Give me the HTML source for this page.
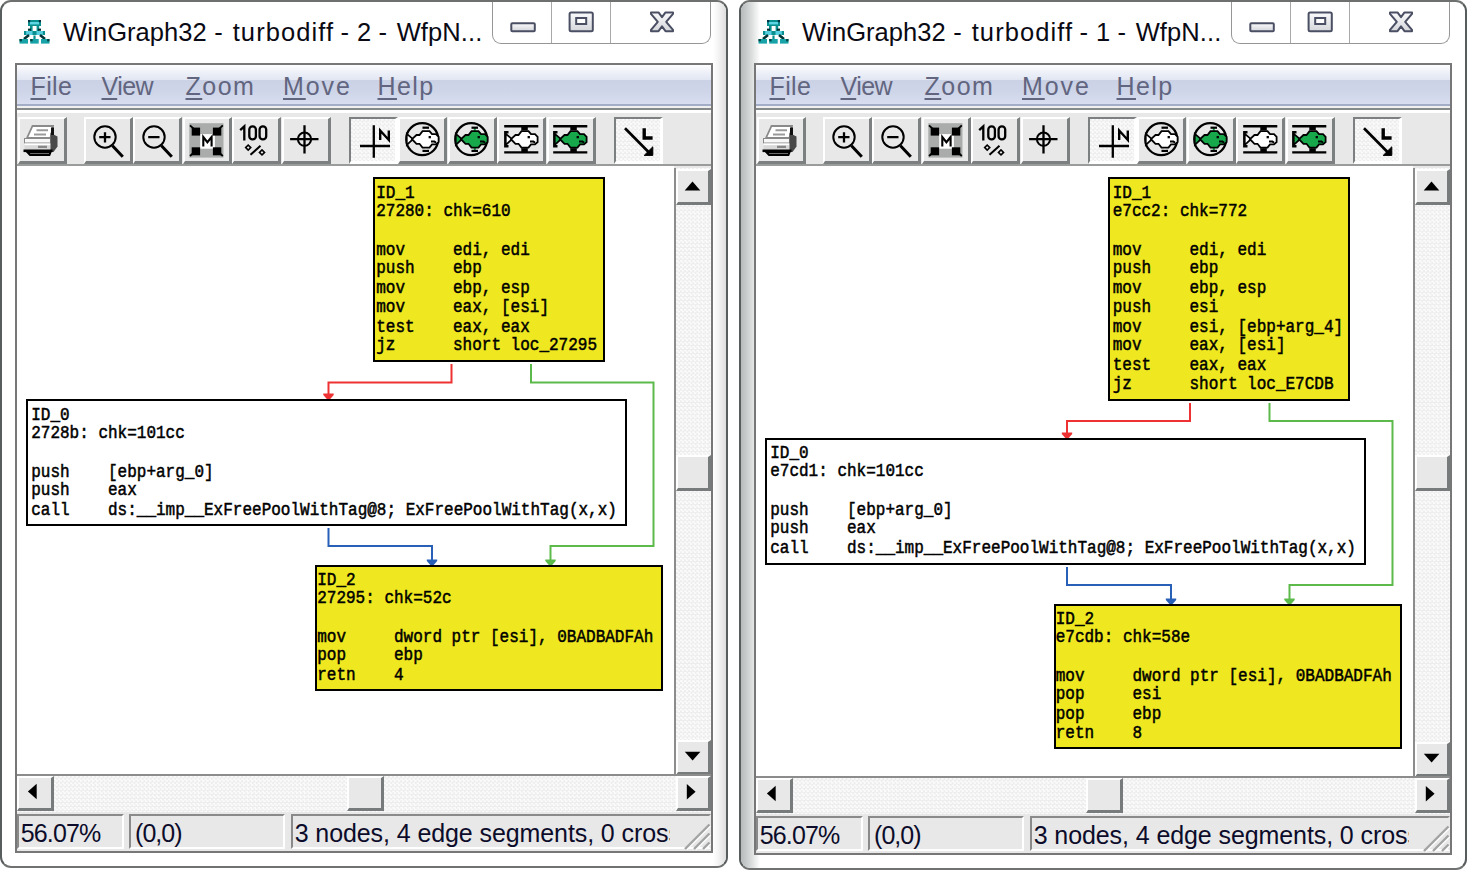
<!DOCTYPE html>
<html><head><meta charset="utf-8"><title>WinGraph32</title>
<style>
html,body{margin:0;padding:0;background:#fff;}
body{width:1467px;height:871px;position:relative;overflow:hidden;font-family:"Liberation Sans",sans-serif;}
.win{position:absolute;top:0;width:728px;height:868px;box-sizing:border-box;border:2px solid #575c5c;border-top-color:#6e7070;border-bottom-color:#707272;border-radius:11px;background:#fff;overflow:hidden;}
.abs{position:absolute;}
.title{position:absolute;top:12px;height:36px;line-height:36px;font-size:25.5px;color:#0a0a14;white-space:nowrap;letter-spacing:0px;}
.cap{position:absolute;left:489.5px;top:-2px;width:217px;height:42.5px;border:1.6px solid #969696;border-top:none;border-radius:0 0 9px 9px;background:#fff;box-sizing:content-box;}
.cap i{position:absolute;top:0;width:1.5px;height:43px;background:#a8a8a8;}
.frame{position:absolute;left:13px;top:61px;width:698px;height:790px;box-sizing:border-box;border:2px solid #777;background:#e8e8e8;overflow:hidden;}
.menu{position:absolute;left:0;top:0;width:100%;height:41px;background:linear-gradient(#fdfdfe 0,#eef1f8 7px,#e2e7f3 14.5px,#cbd2e6 15.5px,#ced5e8 26px,#d8ddef 38.5px,#a4adc6 39.3px,#a4adc6 40.5px,#e8e8ec 41px);}
.menu span{position:absolute;top:2.8px;height:36px;line-height:36px;font-size:25px;color:#62657f;white-space:nowrap;}
.menu span u{text-decoration:underline;text-decoration-thickness:2px;text-underline-offset:2.6px;text-decoration-skip-ink:none;}
.l1{position:absolute;left:0;width:100%;}
.tb{position:absolute;height:47px;width:49px;box-sizing:border-box;border-style:solid;border-width:2.5px 3px 3.5px 2.5px;border-color:#fff #7c8080 #7c8080 #fff;background:#e8e8e8;}
.tb.dn{border-color:#7c8080 #fff #fff #7c8080;background:#f4f4f4 repeating-conic-gradient(#fbfbfb 0 25%,#ededed 0 50%) 0 0/4.08px 4.08px;}
.tb svg{position:absolute;left:-2.5px;top:-2.5px;width:49px;height:47px;}
.canvas{position:absolute;background:#fff;overflow:hidden;}
.node{position:absolute;box-sizing:border-box;border:2.2px solid #000;font-family:"Liberation Mono",monospace;font-size:16px;line-height:19.4px;white-space:pre;color:#000;padding:0;}
.node pre{margin:0;font:inherit;position:absolute;left:2px;top:3.7px;transform-origin:0 0;transform:scaleY(1.1);line-height:17.545px;-webkit-text-stroke:0.45px #000;}
.node pre .fl{position:relative;top:1.8px;}
.y{background:#efe821;}
.w{background:#fff;}
.track{background:#f4f4f4 repeating-conic-gradient(#fbfbfb 0 25%,#ededed 0 50%) 0 0/4.08px 4.08px;}
.sbtn{position:absolute;box-sizing:border-box;border-style:solid;border-width:2px 3px 3px 2px;border-color:#fff #777b7b #777b7b #fff;background:#e8e8e8;}
.sbtn svg{position:absolute;left:0;top:0;}
.pan{position:absolute;height:35px;box-sizing:border-box;border-style:solid;border-width:2px;border-color:#8a8a8a #fff #fff #8a8a8a;background:#e8e8e8;overflow:hidden;}
.pan span{position:absolute;left:3px;top:1px;line-height:32px;font-size:25px;color:#0c0c2a;white-space:nowrap;}
</style></head>
<body>
<div class="win" style="left:0px;height:868px">
<div class="abs" style="left:711px;top:0;width:13px;height:870px;background:linear-gradient(90deg,#fff,#f4f4f4 40%,#dedede);"></div>
<svg class="abs" style="left:14.2px;top:14.2px" width="36" height="30" viewBox="16 16 36 30">
<rect x="28" y="20" width="13" height="6" fill="#0a8f8f"/><rect x="30" y="22" width="9" height="2.4" fill="#5fd6e4"/>
<rect x="28" y="20" width="2.2" height="2.2" fill="#034"/><rect x="38.8" y="20" width="2.2" height="2.2" fill="#034"/>
<rect x="30" y="26" width="2.6" height="5" fill="#0a8f8f"/><rect x="36.6" y="26" width="2.6" height="5" fill="#0a8f8f"/>
<rect x="28" y="28.6" width="3" height="2.2" fill="#033"/><rect x="38" y="28.6" width="3" height="2.2" fill="#033"/>
<rect x="24" y="31" width="21" height="4" fill="#56cfe0"/><rect x="24" y="31" width="2.2" height="4" fill="#0a8f8f"/><rect x="42.8" y="31" width="2.2" height="4" fill="#0a8f8f"/><rect x="32.5" y="31" width="4" height="4" fill="#0a8f8f"/>
<path d="M29,35 L24,39 M40,35 L45,39" stroke="#033" stroke-width="2.6" fill="none"/>
<rect x="33.4" y="35.5" width="2.2" height="4" fill="#0a8f8f"/>
<rect x="19.5" y="39" width="8.5" height="4.6" fill="#17a3a8"/><rect x="30.2" y="39" width="8.5" height="4.6" fill="#17a3a8"/><rect x="41" y="39" width="8.5" height="4.6" fill="#17a3a8"/>
<rect x="19.5" y="39" width="2.4" height="2.4" fill="#044"/><rect x="30.2" y="39" width="2.4" height="2.4" fill="#044"/><rect x="47.1" y="39" width="2.4" height="2.4" fill="#044"/>
</svg>
<span class="title" style="left:61.1px;letter-spacing:0.048px">WinGraph32</span>
<span class="title" style="left:212.3px;letter-spacing:0px">-</span>
<span class="title" style="left:230.7px;letter-spacing:1.088px">turbodiff</span>
<span class="title" style="left:338.5px;letter-spacing:0px">-</span>
<span class="title" style="left:354.9px;letter-spacing:0.9px">2</span>
<span class="title" style="left:376.5px;letter-spacing:0px">-</span>
<span class="title" style="left:394.7px;letter-spacing:0.097px">WfpN...</span>
<div class="cap"><i style="left:58.2px"></i><i style="left:117px"></i>
<svg class="abs" style="left:0;top:0" width="217" height="43" viewBox="493 0 217 43">
<defs><linearGradient id="cg" x1="0" y1="0" x2="0" y2="1"><stop offset="0" stop-color="#fbfbfc"/><stop offset="1" stop-color="#d4d6da"/></linearGradient></defs>
<rect x="511.3" y="23.2" width="23.5" height="8" rx="1" fill="url(#cg)" stroke="#4a4f63" stroke-width="2"/>
<rect x="569.6" y="12.4" width="23.2" height="18.8" rx="1.5" fill="url(#cg)" stroke="#4a4f63" stroke-width="2"/>
<rect x="576.2" y="18" width="10" height="6" fill="#fff" stroke="#4a4f63" stroke-width="2"/>
<path d="M651,12.400 h7.500 l3.500,4.800 l3.500,-4.800 h7.500 v1.500 l-6.800,8 l6.800,8 v1.300 h-7.500 l-3.500,-4.800 l-3.500,4.800 h-7.500 v-1.300 l6.800,-8 l-6.800,-8 z" fill="url(#cg)" stroke="#4a4f63" stroke-width="2" stroke-linejoin="round"/>
</svg></div>
<div class="frame" style="height:790px">
<div class="menu">
<span style="left:13.5px;letter-spacing:0.34px"><u>F</u>ile</span>
<span style="left:84.5px;letter-spacing:-0.527px"><u>V</u>iew</span>
<span style="left:168.5px;letter-spacing:1.474px"><u>Z</u>oom</span>
<span style="left:266px;letter-spacing:1.924px"><u>M</u>ove</span>
<span style="left:360.5px;letter-spacing:1.429px"><u>H</u>elp</span>
</div>
<div class="l1" style="top:41px;height:2px;background:#f0f0f0"></div>
<div class="l1" style="top:43px;height:2px;background:#868a8a"></div>
<div class="l1" style="top:45px;height:2.5px;background:#fff"></div>
<div class="tb" style="left:0.5px;top:52px"><svg viewBox="0 0 49 47"><g>
<polygon points="15.5,9 36,9 33.5,21 10,21" fill="#fff" stroke="#8a8a8a" stroke-width="1.8"/>
<line x1="19.5" y1="13.3" x2="31" y2="13.3" stroke="#9a9a9a" stroke-width="2"/>
<line x1="17" y1="17.6" x2="29" y2="17.6" stroke="#9a9a9a" stroke-width="2"/>
<rect x="7.5" y="21.5" width="26" height="4.5" fill="#f8f8f8" stroke="#8a8a8a" stroke-width="1"/>
<rect x="7.5" y="26.5" width="26" height="6.5" fill="#d8d8d8"/>
<rect x="21" y="28.6" width="9" height="2.4" fill="#888"/>
<rect x="7.5" y="26.6" width="26" height="1.6" fill="#fff"/>
<polygon points="33.5,16 40.5,19.5 40.5,29.5 36.5,35 33.5,35" fill="#4a4a4a"/>
<rect x="34" y="10.5" width="3" height="7.5" fill="#111"/>
<rect x="6.5" y="32.5" width="29" height="2.6" fill="#000"/>
<polygon points="10.5,35.5 33.5,35.5 32.5,38 13,38" fill="#d8d8d8" stroke="#000" stroke-width="1.8"/>
</g></svg></div>
<div class="tb" style="left:67px;top:52px"><svg viewBox="0 0 49 47"><circle cx="21" cy="20" r="10.7" fill="none" stroke="#000" stroke-width="2"/>
<line x1="28.5" y1="28.8" x2="38.8" y2="39.8" stroke="#000" stroke-width="3"/>
<line x1="15.2" y1="20.2" x2="26.5" y2="20.2" stroke="#000" stroke-width="2.3"/><line x1="21" y1="15.2" x2="21" y2="25.5" stroke="#000" stroke-width="2.3"/></svg></div>
<div class="tb" style="left:116px;top:52px"><svg viewBox="0 0 49 47"><circle cx="21" cy="20" r="10.7" fill="none" stroke="#000" stroke-width="2"/>
<line x1="28.5" y1="28.8" x2="38.8" y2="39.8" stroke="#000" stroke-width="3"/>
<line x1="15.2" y1="20.2" x2="26.5" y2="20.2" stroke="#000" stroke-width="2.3"/></svg></div>
<div class="tb" style="left:165.5px;top:52px"><svg viewBox="0 0 49 47"><rect x="7.3" y="6.2" width="34.2" height="34.4" fill="#aaacac"/>
<rect x="18.2" y="17.1" width="14.7" height="14.6" fill="#fff"/>
<g fill="#000" stroke="#000" stroke-width="1.8">
<rect x="10.6" y="11.5" width="6.6" height="6.2"/><rect x="31.8" y="11.5" width="6.6" height="6.2"/>
<rect x="10.6" y="31.2" width="6.6" height="6.2"/><rect x="31.8" y="31.2" width="6.6" height="6.2"/>
<line x1="8" y1="8.3" x2="13" y2="13"/><line x1="40.8" y1="8.3" x2="36" y2="13"/>
<line x1="8" y1="39" x2="13" y2="34.5"/><line x1="40.8" y1="39" x2="36" y2="34.5"/>
</g>
<path d="M21.3,29.6 V20 L25.4,25.2 L29.6,20 V29.6" fill="none" stroke="#000" stroke-width="2.1"/></svg></div>
<div class="tb" style="left:215px;top:52px"><svg viewBox="0 0 49 47"><g fill="none" stroke="#000" stroke-width="2.3">
<path d="M8.2,13.2 L12.3,9.4 V23.4"/>
<rect x="17.3" y="9.4" width="6.6" height="13" rx="3.2"/>
<rect x="27.6" y="9.4" width="6.6" height="13" rx="3.2"/>
<line x1="18.5" y1="37.8" x2="28.5" y2="28.8" stroke-width="2"/>
</g>
<rect x="14.4" y="28.8" width="3.6" height="3.6" transform="rotate(45 16.2 30.6)" fill="none" stroke="#000" stroke-width="1.6"/>
<rect x="28.2" y="33.6" width="3.6" height="3.6" transform="rotate(45 30 35.4)" fill="none" stroke="#000" stroke-width="1.6"/></svg></div>
<div class="tb" style="left:264.5px;top:52px"><svg viewBox="0 0 49 47"><g fill="none" stroke="#000" stroke-width="2.3">
<line x1="9.1" y1="22.2" x2="37.5" y2="22.2"/><line x1="23.5" y1="8.2" x2="23.5" y2="36.5"/>
<circle cx="23.5" cy="22.2" r="6.6" stroke-width="2"/></g></svg></div>
<div class="tb dn" style="left:332px;top:52px"><svg viewBox="0 0 49 47"><g fill="none" stroke="#000" stroke-width="2.3">
<line x1="24.8" y1="8.2" x2="24.8" y2="40.7"/><line x1="11" y1="29" x2="41" y2="29"/>
<path d="M31.2,23 V13.5 L39.8,23 V13.5" stroke-width="2.4"/></g></svg></div>
<div class="tb" style="left:381px;top:52px"><svg viewBox="0 0 49 47"><circle cx="24.2" cy="22.2" r="16" fill="none" stroke="#000" stroke-width="2.2"/>
<rect x="26.8" y="10.5" width="2" height="4" fill="#fff"/><rect x="26.8" y="30" width="2" height="4" fill="#fff"/>
<rect x="24.5" y="9.6" width="6.5" height="2.2" fill="#000"/><rect x="24.5" y="32.8" width="6.5" height="2.2" fill="#000"/>
<polygon points="15,22.2 8.8,16.8 8.8,27.8" fill="#fff" stroke="#000" stroke-width="1.7" stroke-linejoin="miter"/>
<polygon points="14,22.2 18.5,18 21.5,18 24.5,14.2 31.5,14.2 34,17.2 38,17.2 40.6,19.8 40.6,25 38,27.4 34,27.4 31.5,30.6 24.5,30.6 21.5,26.8 18.5,26.8" fill="#fff" stroke="#000" stroke-width="1.8"/>
<rect x="30.6" y="19" width="2.3" height="2.3" fill="#000"/>
<path d="M33,24.4 h3.4 l1.6,1.4" fill="none" stroke="#000" stroke-width="2"/></svg></div>
<div class="tb" style="left:430.5px;top:52px"><svg viewBox="0 0 49 47"><circle cx="24.2" cy="22.2" r="16" fill="none" stroke="#000" stroke-width="2.2"/>
<rect x="26.8" y="10.5" width="2" height="4" fill="#17a84b"/><rect x="26.8" y="30" width="2" height="4" fill="#17a84b"/>
<rect x="24.5" y="9.6" width="6.5" height="2.2" fill="#000"/><rect x="24.5" y="32.8" width="6.5" height="2.2" fill="#000"/>
<polygon points="15,22.2 8.8,16.8 8.8,27.8" fill="#17a84b" stroke="#000" stroke-width="1.7" stroke-linejoin="miter"/>
<polygon points="14,22.2 18.5,18 21.5,18 24.5,14.2 31.5,14.2 34,17.2 38,17.2 40.6,19.8 40.6,25 38,27.4 34,27.4 31.5,30.6 24.5,30.6 21.5,26.8 18.5,26.8" fill="#17a84b" stroke="#000" stroke-width="1.8"/>
<rect x="30.6" y="19" width="2.3" height="2.3" fill="#000"/>
<path d="M33,24.4 h3.4 l1.6,1.4" fill="none" stroke="#000" stroke-width="2"/></svg></div>
<div class="tb" style="left:480px;top:52px"><svg viewBox="0 0 49 47"><line x1="7.2" y1="9.3" x2="41.3" y2="9.3" stroke="#000" stroke-width="2.4"/>
<line x1="7.2" y1="35.4" x2="41.3" y2="35.4" stroke="#000" stroke-width="2.4"/>
<rect x="24.3" y="9.3" width="6.5" height="4" fill="#000"/><rect x="24.3" y="31.2" width="6.5" height="4" fill="#000"/>
<path d="M11.5,15.3 H8.3 V29.3 H11.5" fill="none" stroke="#000" stroke-width="2.4"/>
<polygon points="15,22.2 8.8,16.8 8.8,27.8" fill="#fff" stroke="#000" stroke-width="1.7" stroke-linejoin="miter"/>
<polygon points="14,22.2 18.5,18 21.5,18 24.5,14.2 31.5,14.2 34,17.2 38,17.2 40.6,19.8 40.6,25 38,27.4 34,27.4 31.5,30.6 24.5,30.6 21.5,26.8 18.5,26.8" fill="#fff" stroke="#000" stroke-width="1.8"/>
<rect x="30.6" y="19" width="2.3" height="2.3" fill="#000"/>
<path d="M33,24.4 h3.4 l1.6,1.4" fill="none" stroke="#000" stroke-width="2"/></svg></div>
<div class="tb" style="left:529.5px;top:52px"><svg viewBox="0 0 49 47"><line x1="7.2" y1="9.3" x2="41.3" y2="9.3" stroke="#000" stroke-width="2.4"/>
<line x1="7.2" y1="35.4" x2="41.3" y2="35.4" stroke="#000" stroke-width="2.4"/>
<rect x="24.3" y="9.3" width="6.5" height="4" fill="#000"/><rect x="24.3" y="31.2" width="6.5" height="4" fill="#000"/>
<path d="M11.5,15.3 H8.3 V29.3 H11.5" fill="none" stroke="#000" stroke-width="2.4"/>
<polygon points="15,22.2 8.8,16.8 8.8,27.8" fill="#17a84b" stroke="#000" stroke-width="1.7" stroke-linejoin="miter"/>
<polygon points="14,22.2 18.5,18 21.5,18 24.5,14.2 31.5,14.2 34,17.2 38,17.2 40.6,19.8 40.6,25 38,27.4 34,27.4 31.5,30.6 24.5,30.6 21.5,26.8 18.5,26.8" fill="#17a84b" stroke="#000" stroke-width="1.8"/>
<rect x="30.6" y="19" width="2.3" height="2.3" fill="#000"/>
<path d="M33,24.4 h3.4 l1.6,1.4" fill="none" stroke="#000" stroke-width="2"/></svg></div>
<div class="tb dn" style="left:597px;top:52px"><svg viewBox="0 0 49 47"><g fill="none" stroke="#000">
<line x1="11" y1="11.2" x2="35" y2="35.5" stroke-width="2.7"/>
<path d="M30.2,11.2 V21 H38.6" stroke-width="3.4"/></g>
<polygon points="38.8,29.8 38.8,38.4 30.2,38.4" fill="#000" stroke="#000" stroke-width="1"/></svg></div>
<div class="l1" style="top:99px;height:2px;background:#9a9c9c"></div>
<div class="canvas" style="left:0px;top:101px;width:657px;height:608px">
<svg class="abs" style="left:0;top:0" width="657" height="608" viewBox="17 166 657 608">
<path d="M451.5,364 L451.5,382.5 L328.5,382.5 L328.5,399" fill="none" stroke="#ee3233" stroke-width="2"/><polygon points="323.3,393.4 333.7,393.4 333.7,395 329.3,400 327.7,400 323.3,395" fill="#ee3233"/>
<path d="M531,364 L531,382.5 L653.5,382.5 L653.5,546 L550.5,546 L550.5,565" fill="none" stroke="#5cba4a" stroke-width="2"/><polygon points="545.3,559.4 555.7,559.4 555.7,561 551.3,566 549.7,566 545.3,561" fill="#5cba4a"/>
<path d="M328.5,528 L328.5,546 L432,546 L432,565" fill="none" stroke="#2860b8" stroke-width="2"/><polygon points="426.8,559.4 437.2,559.4 437.2,561 432.8,566 431.2,566 426.8,561" fill="#2860b8"/>
</svg>
<div class="node y" style="left:356px;top:11px;width:232px;height:184.5px"><pre style="left:1.2px"><span class="fl">ID_1</span>
27280: chk=610

mov     edi, edi
push    ebp
mov     ebp, esp
mov     eax, [esi]
test    eax, eax
jz      short loc_27295</pre></div>
<div class="node w" style="left:9px;top:233px;width:601px;height:127px"><pre style="left:3.2px"><span class="fl">ID_0</span>
2728b: chk=101cc

push    [ebp+arg_0]
push    eax
call    ds:__imp__ExFreePoolWithTag@8; ExFreePoolWithTag(x,x)</pre></div>
<div class="node y" style="left:297.5px;top:398.5px;width:348.5px;height:126.5px"><pre style="left:0.7px"><span class="fl">ID_2</span>
27295: chk=52c

mov     dword ptr [esi], 0BADBADFAh
pop     ebp
retn    4</pre></div>
</div>
<div class="abs track" style="left:657px;top:103px;width:37px;height:606px;border-left:2px solid #8c8c8c;box-sizing:border-box"></div>
<div class="sbtn" style="left:659px;top:103.5px;width:35px;height:36px"><svg width="35" height="35" viewBox="0 0 35 35"><polygon points="6.7,19.4 22.3,19.4 14.5,10.6" fill="#000"/></svg></div>
<div class="sbtn" style="left:659px;top:390px;width:35px;height:35.5px"></div>
<div class="sbtn" style="left:659px;top:675px;width:35px;height:34.5px"><svg width="35" height="35" viewBox="0 0 35 35"><polygon points="6.8,9.799999999999999 22.4,9.799999999999999 14.6,18.6" fill="#000"/></svg></div>
<div class="abs track" style="left:0px;top:709px;width:694px;height:38px;border-top:2px solid #8c8c8c;box-sizing:border-box"></div>
<div class="sbtn" style="left:0px;top:711px;width:36.5px;height:34.5px"><svg width="36" height="35" viewBox="0 0 36 35"><polygon points="17.700000000000003,5.7 17.700000000000003,21.3 8.9,13.5" fill="#000"/></svg></div>
<div class="sbtn" style="left:330px;top:711px;width:36.5px;height:34.5px"></div>
<div class="sbtn" style="left:659px;top:711px;width:35px;height:34.5px"><svg width="35" height="35" viewBox="0 0 35 35"><polygon points="8.799999999999999,5.8999999999999995 8.799999999999999,21.5 17.6,13.7" fill="#000"/></svg></div>
<div class="pan" style="left:0px;top:749px;width:106.5px"><span style="left:1.8px;letter-spacing:-0.872px">56.07%</span></div>
<div class="pan" style="left:112px;top:749px;width:155.5px"><span style="left:4.1px;letter-spacing:-0.995px">(0,0)</span></div>
<div class="pan" style="left:273.5px;top:749px;width:420.5px;border-right-color:#e8e8e8"><div class="abs" style="left:0;top:0;width:377px;height:34px;overflow:hidden"><span style="left:2.2px;letter-spacing:-0.091px">3 nodes, 4 edge segments, 0 crossings</span></div></div>
<svg class="abs" style="left:659px;top:750px" width="36" height="36" viewBox="676 815 36 36">
<g stroke="#fff" stroke-width="2" fill="none"><line x1="686.5" y1="849.5" x2="710.5" y2="825.5"/><line x1="695.5" y1="849.5" x2="710.5" y2="834.5"/><line x1="704.5" y1="849.5" x2="710.5" y2="843.5"/></g>
<g stroke="#a2a4a4" stroke-width="2.4" fill="none"><line x1="685" y1="849" x2="709.5" y2="824.5"/><line x1="694" y1="849" x2="709.5" y2="833.5"/><line x1="703" y1="849" x2="709.5" y2="842.5"/></g></svg>
</div>
</div>
<div class="win" style="left:739px;height:870.2px">
<div class="abs" style="left:0;top:0;width:19px;height:870px;background:linear-gradient(90deg,#b6baba 0,#d0d3d3 40%,#e8e9e9 72%,#fff 100%);"></div>
<svg class="abs" style="left:14.2px;top:14.2px" width="36" height="30" viewBox="16 16 36 30">
<rect x="28" y="20" width="13" height="6" fill="#0a8f8f"/><rect x="30" y="22" width="9" height="2.4" fill="#5fd6e4"/>
<rect x="28" y="20" width="2.2" height="2.2" fill="#034"/><rect x="38.8" y="20" width="2.2" height="2.2" fill="#034"/>
<rect x="30" y="26" width="2.6" height="5" fill="#0a8f8f"/><rect x="36.6" y="26" width="2.6" height="5" fill="#0a8f8f"/>
<rect x="28" y="28.6" width="3" height="2.2" fill="#033"/><rect x="38" y="28.6" width="3" height="2.2" fill="#033"/>
<rect x="24" y="31" width="21" height="4" fill="#56cfe0"/><rect x="24" y="31" width="2.2" height="4" fill="#0a8f8f"/><rect x="42.8" y="31" width="2.2" height="4" fill="#0a8f8f"/><rect x="32.5" y="31" width="4" height="4" fill="#0a8f8f"/>
<path d="M29,35 L24,39 M40,35 L45,39" stroke="#033" stroke-width="2.6" fill="none"/>
<rect x="33.4" y="35.5" width="2.2" height="4" fill="#0a8f8f"/>
<rect x="19.5" y="39" width="8.5" height="4.6" fill="#17a3a8"/><rect x="30.2" y="39" width="8.5" height="4.6" fill="#17a3a8"/><rect x="41" y="39" width="8.5" height="4.6" fill="#17a3a8"/>
<rect x="19.5" y="39" width="2.4" height="2.4" fill="#044"/><rect x="30.2" y="39" width="2.4" height="2.4" fill="#044"/><rect x="47.1" y="39" width="2.4" height="2.4" fill="#044"/>
</svg>
<span class="title" style="left:61.1px;letter-spacing:0.048px">WinGraph32</span>
<span class="title" style="left:212.3px;letter-spacing:0px">-</span>
<span class="title" style="left:230.7px;letter-spacing:1.088px">turbodiff</span>
<span class="title" style="left:338.5px;letter-spacing:0px">-</span>
<span class="title" style="left:354.9px;letter-spacing:0.9px">1</span>
<span class="title" style="left:376.5px;letter-spacing:0px">-</span>
<span class="title" style="left:394.7px;letter-spacing:0.097px">WfpN...</span>
<div class="cap"><i style="left:58.2px"></i><i style="left:117px"></i>
<svg class="abs" style="left:0;top:0" width="217" height="43" viewBox="493 0 217 43">
<defs><linearGradient id="cg" x1="0" y1="0" x2="0" y2="1"><stop offset="0" stop-color="#fbfbfc"/><stop offset="1" stop-color="#d4d6da"/></linearGradient></defs>
<rect x="511.3" y="23.2" width="23.5" height="8" rx="1" fill="url(#cg)" stroke="#4a4f63" stroke-width="2"/>
<rect x="569.6" y="12.4" width="23.2" height="18.8" rx="1.5" fill="url(#cg)" stroke="#4a4f63" stroke-width="2"/>
<rect x="576.2" y="18" width="10" height="6" fill="#fff" stroke="#4a4f63" stroke-width="2"/>
<path d="M651,12.400 h7.500 l3.500,4.800 l3.500,-4.800 h7.500 v1.500 l-6.800,8 l6.800,8 v1.300 h-7.500 l-3.500,-4.800 l-3.500,4.800 h-7.500 v-1.300 l6.800,-8 l-6.800,-8 z" fill="url(#cg)" stroke="#4a4f63" stroke-width="2" stroke-linejoin="round"/>
</svg></div>
<div class="frame" style="height:792.2px">
<div class="menu">
<span style="left:13.5px;letter-spacing:0.34px"><u>F</u>ile</span>
<span style="left:84.5px;letter-spacing:-0.527px"><u>V</u>iew</span>
<span style="left:168.5px;letter-spacing:1.474px"><u>Z</u>oom</span>
<span style="left:266px;letter-spacing:1.924px"><u>M</u>ove</span>
<span style="left:360.5px;letter-spacing:1.429px"><u>H</u>elp</span>
</div>
<div class="l1" style="top:41px;height:2px;background:#f0f0f0"></div>
<div class="l1" style="top:43px;height:2px;background:#868a8a"></div>
<div class="l1" style="top:45px;height:2.5px;background:#fff"></div>
<div class="tb" style="left:0.5px;top:52px"><svg viewBox="0 0 49 47"><g>
<polygon points="15.5,9 36,9 33.5,21 10,21" fill="#fff" stroke="#8a8a8a" stroke-width="1.8"/>
<line x1="19.5" y1="13.3" x2="31" y2="13.3" stroke="#9a9a9a" stroke-width="2"/>
<line x1="17" y1="17.6" x2="29" y2="17.6" stroke="#9a9a9a" stroke-width="2"/>
<rect x="7.5" y="21.5" width="26" height="4.5" fill="#f8f8f8" stroke="#8a8a8a" stroke-width="1"/>
<rect x="7.5" y="26.5" width="26" height="6.5" fill="#d8d8d8"/>
<rect x="21" y="28.6" width="9" height="2.4" fill="#888"/>
<rect x="7.5" y="26.6" width="26" height="1.6" fill="#fff"/>
<polygon points="33.5,16 40.5,19.5 40.5,29.5 36.5,35 33.5,35" fill="#4a4a4a"/>
<rect x="34" y="10.5" width="3" height="7.5" fill="#111"/>
<rect x="6.5" y="32.5" width="29" height="2.6" fill="#000"/>
<polygon points="10.5,35.5 33.5,35.5 32.5,38 13,38" fill="#d8d8d8" stroke="#000" stroke-width="1.8"/>
</g></svg></div>
<div class="tb" style="left:67px;top:52px"><svg viewBox="0 0 49 47"><circle cx="21" cy="20" r="10.7" fill="none" stroke="#000" stroke-width="2"/>
<line x1="28.5" y1="28.8" x2="38.8" y2="39.8" stroke="#000" stroke-width="3"/>
<line x1="15.2" y1="20.2" x2="26.5" y2="20.2" stroke="#000" stroke-width="2.3"/><line x1="21" y1="15.2" x2="21" y2="25.5" stroke="#000" stroke-width="2.3"/></svg></div>
<div class="tb" style="left:116px;top:52px"><svg viewBox="0 0 49 47"><circle cx="21" cy="20" r="10.7" fill="none" stroke="#000" stroke-width="2"/>
<line x1="28.5" y1="28.8" x2="38.8" y2="39.8" stroke="#000" stroke-width="3"/>
<line x1="15.2" y1="20.2" x2="26.5" y2="20.2" stroke="#000" stroke-width="2.3"/></svg></div>
<div class="tb" style="left:165.5px;top:52px"><svg viewBox="0 0 49 47"><rect x="7.3" y="6.2" width="34.2" height="34.4" fill="#aaacac"/>
<rect x="18.2" y="17.1" width="14.7" height="14.6" fill="#fff"/>
<g fill="#000" stroke="#000" stroke-width="1.8">
<rect x="10.6" y="11.5" width="6.6" height="6.2"/><rect x="31.8" y="11.5" width="6.6" height="6.2"/>
<rect x="10.6" y="31.2" width="6.6" height="6.2"/><rect x="31.8" y="31.2" width="6.6" height="6.2"/>
<line x1="8" y1="8.3" x2="13" y2="13"/><line x1="40.8" y1="8.3" x2="36" y2="13"/>
<line x1="8" y1="39" x2="13" y2="34.5"/><line x1="40.8" y1="39" x2="36" y2="34.5"/>
</g>
<path d="M21.3,29.6 V20 L25.4,25.2 L29.6,20 V29.6" fill="none" stroke="#000" stroke-width="2.1"/></svg></div>
<div class="tb" style="left:215px;top:52px"><svg viewBox="0 0 49 47"><g fill="none" stroke="#000" stroke-width="2.3">
<path d="M8.2,13.2 L12.3,9.4 V23.4"/>
<rect x="17.3" y="9.4" width="6.6" height="13" rx="3.2"/>
<rect x="27.6" y="9.4" width="6.6" height="13" rx="3.2"/>
<line x1="18.5" y1="37.8" x2="28.5" y2="28.8" stroke-width="2"/>
</g>
<rect x="14.4" y="28.8" width="3.6" height="3.6" transform="rotate(45 16.2 30.6)" fill="none" stroke="#000" stroke-width="1.6"/>
<rect x="28.2" y="33.6" width="3.6" height="3.6" transform="rotate(45 30 35.4)" fill="none" stroke="#000" stroke-width="1.6"/></svg></div>
<div class="tb" style="left:264.5px;top:52px"><svg viewBox="0 0 49 47"><g fill="none" stroke="#000" stroke-width="2.3">
<line x1="9.1" y1="22.2" x2="37.5" y2="22.2"/><line x1="23.5" y1="8.2" x2="23.5" y2="36.5"/>
<circle cx="23.5" cy="22.2" r="6.6" stroke-width="2"/></g></svg></div>
<div class="tb dn" style="left:332px;top:52px"><svg viewBox="0 0 49 47"><g fill="none" stroke="#000" stroke-width="2.3">
<line x1="24.8" y1="8.2" x2="24.8" y2="40.7"/><line x1="11" y1="29" x2="41" y2="29"/>
<path d="M31.2,23 V13.5 L39.8,23 V13.5" stroke-width="2.4"/></g></svg></div>
<div class="tb" style="left:381px;top:52px"><svg viewBox="0 0 49 47"><circle cx="24.2" cy="22.2" r="16" fill="none" stroke="#000" stroke-width="2.2"/>
<rect x="26.8" y="10.5" width="2" height="4" fill="#fff"/><rect x="26.8" y="30" width="2" height="4" fill="#fff"/>
<rect x="24.5" y="9.6" width="6.5" height="2.2" fill="#000"/><rect x="24.5" y="32.8" width="6.5" height="2.2" fill="#000"/>
<polygon points="15,22.2 8.8,16.8 8.8,27.8" fill="#fff" stroke="#000" stroke-width="1.7" stroke-linejoin="miter"/>
<polygon points="14,22.2 18.5,18 21.5,18 24.5,14.2 31.5,14.2 34,17.2 38,17.2 40.6,19.8 40.6,25 38,27.4 34,27.4 31.5,30.6 24.5,30.6 21.5,26.8 18.5,26.8" fill="#fff" stroke="#000" stroke-width="1.8"/>
<rect x="30.6" y="19" width="2.3" height="2.3" fill="#000"/>
<path d="M33,24.4 h3.4 l1.6,1.4" fill="none" stroke="#000" stroke-width="2"/></svg></div>
<div class="tb" style="left:430.5px;top:52px"><svg viewBox="0 0 49 47"><circle cx="24.2" cy="22.2" r="16" fill="none" stroke="#000" stroke-width="2.2"/>
<rect x="26.8" y="10.5" width="2" height="4" fill="#17a84b"/><rect x="26.8" y="30" width="2" height="4" fill="#17a84b"/>
<rect x="24.5" y="9.6" width="6.5" height="2.2" fill="#000"/><rect x="24.5" y="32.8" width="6.5" height="2.2" fill="#000"/>
<polygon points="15,22.2 8.8,16.8 8.8,27.8" fill="#17a84b" stroke="#000" stroke-width="1.7" stroke-linejoin="miter"/>
<polygon points="14,22.2 18.5,18 21.5,18 24.5,14.2 31.5,14.2 34,17.2 38,17.2 40.6,19.8 40.6,25 38,27.4 34,27.4 31.5,30.6 24.5,30.6 21.5,26.8 18.5,26.8" fill="#17a84b" stroke="#000" stroke-width="1.8"/>
<rect x="30.6" y="19" width="2.3" height="2.3" fill="#000"/>
<path d="M33,24.4 h3.4 l1.6,1.4" fill="none" stroke="#000" stroke-width="2"/></svg></div>
<div class="tb" style="left:480px;top:52px"><svg viewBox="0 0 49 47"><line x1="7.2" y1="9.3" x2="41.3" y2="9.3" stroke="#000" stroke-width="2.4"/>
<line x1="7.2" y1="35.4" x2="41.3" y2="35.4" stroke="#000" stroke-width="2.4"/>
<rect x="24.3" y="9.3" width="6.5" height="4" fill="#000"/><rect x="24.3" y="31.2" width="6.5" height="4" fill="#000"/>
<path d="M11.5,15.3 H8.3 V29.3 H11.5" fill="none" stroke="#000" stroke-width="2.4"/>
<polygon points="15,22.2 8.8,16.8 8.8,27.8" fill="#fff" stroke="#000" stroke-width="1.7" stroke-linejoin="miter"/>
<polygon points="14,22.2 18.5,18 21.5,18 24.5,14.2 31.5,14.2 34,17.2 38,17.2 40.6,19.8 40.6,25 38,27.4 34,27.4 31.5,30.6 24.5,30.6 21.5,26.8 18.5,26.8" fill="#fff" stroke="#000" stroke-width="1.8"/>
<rect x="30.6" y="19" width="2.3" height="2.3" fill="#000"/>
<path d="M33,24.4 h3.4 l1.6,1.4" fill="none" stroke="#000" stroke-width="2"/></svg></div>
<div class="tb" style="left:529.5px;top:52px"><svg viewBox="0 0 49 47"><line x1="7.2" y1="9.3" x2="41.3" y2="9.3" stroke="#000" stroke-width="2.4"/>
<line x1="7.2" y1="35.4" x2="41.3" y2="35.4" stroke="#000" stroke-width="2.4"/>
<rect x="24.3" y="9.3" width="6.5" height="4" fill="#000"/><rect x="24.3" y="31.2" width="6.5" height="4" fill="#000"/>
<path d="M11.5,15.3 H8.3 V29.3 H11.5" fill="none" stroke="#000" stroke-width="2.4"/>
<polygon points="15,22.2 8.8,16.8 8.8,27.8" fill="#17a84b" stroke="#000" stroke-width="1.7" stroke-linejoin="miter"/>
<polygon points="14,22.2 18.5,18 21.5,18 24.5,14.2 31.5,14.2 34,17.2 38,17.2 40.6,19.8 40.6,25 38,27.4 34,27.4 31.5,30.6 24.5,30.6 21.5,26.8 18.5,26.8" fill="#17a84b" stroke="#000" stroke-width="1.8"/>
<rect x="30.6" y="19" width="2.3" height="2.3" fill="#000"/>
<path d="M33,24.4 h3.4 l1.6,1.4" fill="none" stroke="#000" stroke-width="2"/></svg></div>
<div class="tb dn" style="left:597px;top:52px"><svg viewBox="0 0 49 47"><g fill="none" stroke="#000">
<line x1="11" y1="11.2" x2="35" y2="35.5" stroke-width="2.7"/>
<path d="M30.2,11.2 V21 H38.6" stroke-width="3.4"/></g>
<polygon points="38.8,29.8 38.8,38.4 30.2,38.4" fill="#000" stroke="#000" stroke-width="1"/></svg></div>
<div class="l1" style="top:99px;height:2px;background:#9a9c9c"></div>
<div class="canvas" style="left:0px;top:101px;width:657px;height:610.2px">
<svg class="abs" style="left:0;top:0" width="657" height="610.2" viewBox="17 166 657 610.2">
<path d="M451,403 L451,421 L328,421 L328,438" fill="none" stroke="#ee3233" stroke-width="2"/><polygon points="322.8,432.4 333.2,432.4 333.2,434 328.8,439 327.2,439 322.8,434" fill="#ee3233"/>
<path d="M530.5,403 L530.5,421 L653.5,421 L653.5,585 L550.5,585 L550.5,604" fill="none" stroke="#5cba4a" stroke-width="2"/><polygon points="545.3,598.4 555.7,598.4 555.7,600 551.3,605 549.7,605 545.3,600" fill="#5cba4a"/>
<path d="M328,567 L328,585 L432,585 L432,604" fill="none" stroke="#2860b8" stroke-width="2"/><polygon points="426.8,598.4 437.2,598.4 437.2,600 432.8,605 431.2,605 426.8,600" fill="#2860b8"/>
</svg>
<div class="node y" style="left:351.5px;top:11px;width:242.5px;height:223.5px"><pre style="left:3.2px"><span class="fl">ID_1</span>
e7cc2: chk=772

mov     edi, edi
push    ebp
mov     ebp, esp
push    esi
mov     esi, [ebp+arg_4]
mov     eax, [esi]
test    eax, eax
jz      short loc_E7CDB</pre></div>
<div class="node w" style="left:9px;top:271.5px;width:600.5px;height:127.0px"><pre style="left:3.2px"><span class="fl">ID_0</span>
e7cd1: chk=101cc

push    [ebp+arg_0]
push    eax
call    ds:__imp__ExFreePoolWithTag@8; ExFreePoolWithTag(x,x)</pre></div>
<div class="node y" style="left:297.5px;top:437.5px;width:348.5px;height:145.5px"><pre style="left:0.2px"><span class="fl">ID_2</span>
e7cdb: chk=58e

mov     dword ptr [esi], 0BADBADFAh
pop     esi
pop     ebp
retn    8</pre></div>
</div>
<div class="abs track" style="left:657px;top:103px;width:37px;height:608.2px;border-left:2px solid #8c8c8c;box-sizing:border-box"></div>
<div class="sbtn" style="left:659px;top:103.5px;width:35px;height:36px"><svg width="35" height="35" viewBox="0 0 35 35"><polygon points="6.7,19.4 22.3,19.4 14.5,10.6" fill="#000"/></svg></div>
<div class="sbtn" style="left:659px;top:390px;width:35px;height:35.5px"></div>
<div class="sbtn" style="left:659px;top:677.2px;width:35px;height:34.5px"><svg width="35" height="35" viewBox="0 0 35 35"><polygon points="6.8,9.799999999999999 22.4,9.799999999999999 14.6,18.6" fill="#000"/></svg></div>
<div class="abs track" style="left:0px;top:711.2px;width:694px;height:38px;border-top:2px solid #8c8c8c;box-sizing:border-box"></div>
<div class="sbtn" style="left:0px;top:713.2px;width:36.5px;height:34.5px"><svg width="36" height="35" viewBox="0 0 36 35"><polygon points="17.700000000000003,5.7 17.700000000000003,21.3 8.9,13.5" fill="#000"/></svg></div>
<div class="sbtn" style="left:330px;top:713.2px;width:36.5px;height:34.5px"></div>
<div class="sbtn" style="left:659px;top:713.2px;width:35px;height:34.5px"><svg width="35" height="35" viewBox="0 0 35 35"><polygon points="8.799999999999999,5.8999999999999995 8.799999999999999,21.5 17.6,13.7" fill="#000"/></svg></div>
<div class="pan" style="left:0px;top:751.2px;width:106.5px"><span style="left:1.8px;letter-spacing:-0.872px">56.07%</span></div>
<div class="pan" style="left:112px;top:751.2px;width:155.5px"><span style="left:4.1px;letter-spacing:-0.995px">(0,0)</span></div>
<div class="pan" style="left:273.5px;top:751.2px;width:420.5px;border-right-color:#e8e8e8"><div class="abs" style="left:0;top:0;width:377px;height:34px;overflow:hidden"><span style="left:2.2px;letter-spacing:-0.091px">3 nodes, 4 edge segments, 0 crossings</span></div></div>
<svg class="abs" style="left:659px;top:752.2px" width="36" height="36" viewBox="676 815 36 36">
<g stroke="#fff" stroke-width="2" fill="none"><line x1="686.5" y1="849.5" x2="710.5" y2="825.5"/><line x1="695.5" y1="849.5" x2="710.5" y2="834.5"/><line x1="704.5" y1="849.5" x2="710.5" y2="843.5"/></g>
<g stroke="#a2a4a4" stroke-width="2.4" fill="none"><line x1="685" y1="849" x2="709.5" y2="824.5"/><line x1="694" y1="849" x2="709.5" y2="833.5"/><line x1="703" y1="849" x2="709.5" y2="842.5"/></g></svg>
</div>
</div>
</body></html>
